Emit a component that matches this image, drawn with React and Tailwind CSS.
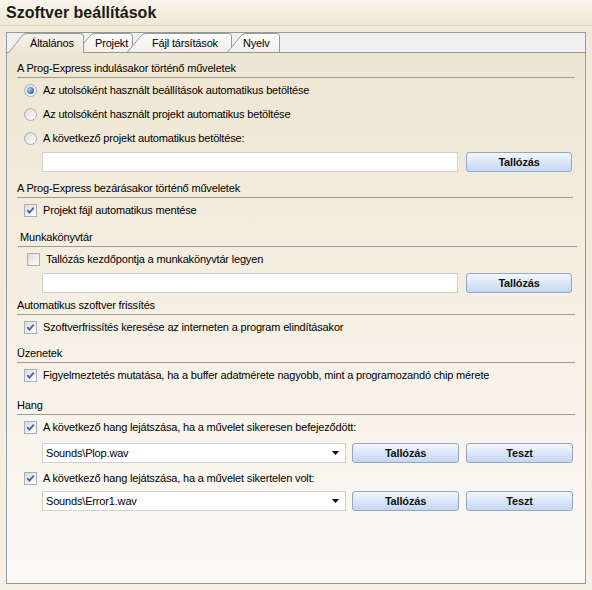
import { useState } from "react";

const tabs = [
  { label: "Általános", width: 76, ml: 1, pl: 22 },
  { label: "Projekt", width: 57, ml: -8, pl: 19 },
  { label: "Fájl társítások", width: 105, ml: -6, pl: 25 },
  { label: "Nyelv", width: 53, ml: -5, pl: 16 },
];

function TabShape({ width, height, selected, id }) {
  const dx = 14;
  const w = width - 0.5;
  const d = `M0.5 ${height} L${dx} 3 Q${dx + 1.5} 0.5 ${dx + 5} 0.5 L${w - 3} 0.5 Q${w} 0.5 ${w} 3 L${w} ${height}`;

  return (
    <svg
      className="absolute inset-0"
      width={width}
      height={height}
      viewBox={`0 0 ${width} ${height}`}
      aria-hidden="true"
    >
      <defs>
        <linearGradient id={id} x1="0" y1="0" x2="0" y2="1">
          <stop offset="0" stopColor={selected ? "#f6f2ea" : "#fdfcfa"} />
          <stop offset="1" stopColor={selected ? "#efe7d5" : "#f3f0e8"} />
        </linearGradient>
      </defs>
      <path d={`${d} Z`} fill={`url(#${id})`} />
      <path d={d} fill="none" stroke="#919b9c" strokeWidth="1" />
    </svg>
  );
}

function TabStrip({ active, onSelect }) {
  return (
    <div className="flex h-[20px] items-end border-b border-[#919b9c] bg-[#f0f0f0]">
      {tabs.map((tab, index) => {
        const selected = index === active;
        const height = selected ? 20 : 19;

        return (
          <button
            key={tab.label}
            type="button"
            onClick={() => onSelect(index)}
            style={{ width: tab.width, height, marginLeft: tab.ml, paddingLeft: tab.pl }}
            className={`relative flex shrink-0 items-center pt-[1px] text-left text-[11px] text-black ${
              selected ? "z-10 -mb-px" : ""
            }`}
          >
            <TabShape width={tab.width} height={height} selected={selected} id={`tab-${index}`} />
            <span className="relative whitespace-nowrap">{tab.label}</span>
          </button>
        );
      })}
    </div>
  );
}

function SectionHeader({ children, className = "" }) {
  return (
    <div className={`border-b border-[#a09d92] pb-[2px] leading-[14px] ${className}`}>
      {children}
    </div>
  );
}

function Radio({ checked }) {
  return (
    <span className="flex h-[13px] w-[13px] shrink-0 items-center justify-center rounded-full border border-[#a5aebb] bg-linear-to-br from-[#dcdbd4] to-white">
      {checked ? (
        <span className="h-[7px] w-[7px] rounded-full bg-[radial-gradient(circle_at_35%_35%,#a8d0f5,#2c5db3_75%)]" />
      ) : null}
    </span>
  );
}

function Check({ checked }) {
  return (
    <span className="flex h-[13px] w-[13px] shrink-0 items-center justify-center border border-[#a5aebb] bg-linear-to-br from-[#dcdbd4] to-white">
      {checked ? (
        <svg width="9" height="9" viewBox="0 0 9 9" aria-hidden="true">
          <path d="M1.2 4.2 L3.4 6.6 L7.8 1.6" fill="none" stroke="#4f63ab" strokeWidth="1.9" />
        </svg>
      ) : null}
    </span>
  );
}

function OptionRow({ control, children, className = "pl-[17px]" }) {
  return (
    <div className={`flex h-[24px] items-center gap-[6px] ${className}`}>
      {control}
      <span className="whitespace-nowrap">{children}</span>
    </div>
  );
}

function Button({ children, width }) {
  return (
    <button
      type="button"
      style={{ width }}
      className="h-[20px] shrink-0 rounded-[3px] border border-[#95a6bf] bg-linear-to-b from-[#f3f7fd] to-[#c4d7f3] text-[11px] font-bold text-[#111]"
    >
      {children}
    </button>
  );
}

function TextBox({ width, value = "" }) {
  return (
    <div
      style={{ width }}
      className="flex h-[20px] shrink-0 items-center border border-[#d2d0c8] bg-white px-[3px]"
    >
      {value}
    </div>
  );
}

function Select({ value }) {
  return (
    <div className="flex h-[20px] w-[304px] shrink-0 items-center justify-between border border-[#d2d0c8] bg-white pl-[3px] pr-[6px]">
      <span>{value}</span>
      <svg width="7" height="4" viewBox="0 0 7 4" aria-hidden="true">
        <path d="M0 0 H7 L3.5 4 Z" fill="#000" />
      </svg>
    </div>
  );
}

export default function App() {
  const [activeTab, setActiveTab] = useState(0);

  return (
    <div className="h-[590px] w-[592px] overflow-hidden bg-linear-to-b from-[#f1e9d8] to-[#f5efe4] font-['Liberation_Sans',Arial,sans-serif] text-[11px] tracking-[-0.17px] text-black">
      <div className="flex h-[26px] items-center border-b border-[#e4d9c3] bg-linear-to-b from-[#f9f5ec] to-[#f0e7d5] pl-[6px] pt-[1px] text-[16px] font-bold tracking-normal text-[#1a1a1a]">
        Szoftver beállítások
      </div>

      <div className="ml-[6px] mt-[6px] h-[552px] w-[580px] border border-[#919b9c] bg-linear-to-b from-[#eee5d1] to-[#fcfaf6]">
        <TabStrip active={activeTab} onSelect={setActiveTab} />

        <SectionHeader className="ml-[10px] mr-[10px] mt-[8px]">
          A Prog-Express indulásakor történő műveletek
        </SectionHeader>
        <OptionRow control={<Radio checked />}>
          Az utolsóként használt beállítások automatikus betöltése
        </OptionRow>
        <OptionRow control={<Radio />}>Az utolsóként használt projekt automatikus betöltése</OptionRow>
        <OptionRow control={<Radio />}>A következő projekt automatikus betöltése:</OptionRow>
        <div className="ml-[35px] mt-[2px] flex gap-[8px]">
          <TextBox width={416} />
          <Button width={106}>Tallózás</Button>
        </div>

        <SectionHeader className="ml-[10px] mr-[12px] mt-[9px]">
          A Prog-Express bezárásakor történő műveletek
        </SectionHeader>
        <OptionRow control={<Check checked />}>Projekt fájl automatikus mentése</OptionRow>

        <SectionHeader className="ml-[11px] mr-[8px] mt-[8px] pl-[2px]">Munkakönyvtár</SectionHeader>
        <OptionRow control={<Check />} className="pl-[20px]">
          Tallózás kezdőpontja a munkakönyvtár legyen
        </OptionRow>
        <div className="ml-[35px] mt-[2px] flex gap-[8px]">
          <TextBox width={416} />
          <Button width={106}>Tallózás</Button>
        </div>

        <SectionHeader className="ml-[10px] mr-[10px] mt-[5px]">
          Automatikus szoftver frissítés
        </SectionHeader>
        <OptionRow control={<Check checked />}>
          Szoftverfrissítés keresése az interneten a program elindításakor
        </OptionRow>

        <SectionHeader className="ml-[10px] mr-[10px] mt-[7px]">Üzenetek</SectionHeader>
        <OptionRow control={<Check checked />}>
          Figyelmeztetés mutatása, ha a buffer adatmérete nagyobb, mint a programozandó chip mérete
        </OptionRow>

        <SectionHeader className="ml-[10px] mr-[10px] mt-[11px]">Hang</SectionHeader>
        <OptionRow control={<Check checked />}>
          A következő hang lejátszása, ha a művelet sikeresen befejeződött:
        </OptionRow>
        <div className="ml-[35px] mt-[4px] flex">
          <Select value="Sounds\Plop.wav" />
          <div className="ml-[6px] flex gap-[7px]">
            <Button width={107}>Tallózás</Button>
            <Button width={107}>Teszt</Button>
          </div>
        </div>
        <OptionRow control={<Check checked />} className="mt-[3px] pl-[17px]">
          A következő hang lejátszása, ha a művelet sikertelen volt:
        </OptionRow>
        <div className="ml-[35px] mt-[1px] flex">
          <Select value="Sounds\Error1.wav" />
          <div className="ml-[6px] flex gap-[7px]">
            <Button width={107}>Tallózás</Button>
            <Button width={107}>Teszt</Button>
          </div>
        </div>
      </div>
    </div>
  );
}
